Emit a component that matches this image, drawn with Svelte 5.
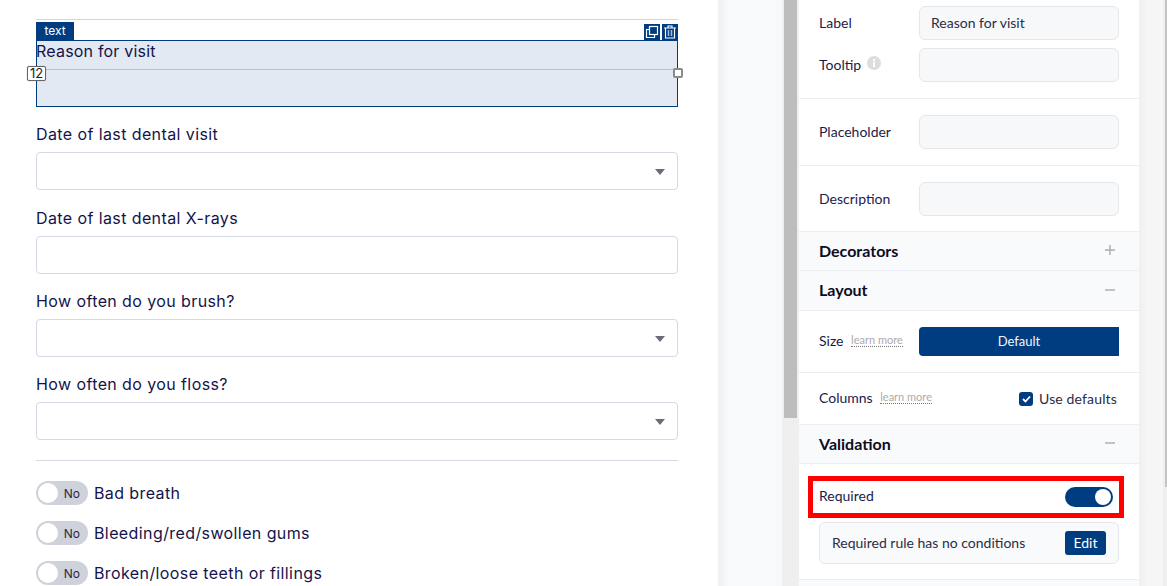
<script>
	const selects = [
		{ label: 'Date of last dental visit', caret: true },
		{ label: 'Date of last dental X-rays', caret: false },
		{ label: 'How often do you brush?', caret: true },
		{ label: 'How often do you floss?', caret: true }
	];
	const toggles = ['Bad breath', 'Bleeding/red/swollen gums', 'Broken/loose teeth or fillings'];
</script>

<div class="page">
	<main class="canvas">
		<div class="block">
			<div class="block-bar">
				<span class="tag">text</span>
				<span class="actions">
					<span class="action">
						<svg width="14" height="14" viewBox="0 0 14 14" fill="none" stroke="#fff" stroke-width="1.2">
							<rect x="4.5" y="1.5" width="8" height="8" />
							<path d="M4.5 4.5H1.5V12.5H9.5V9.5" />
						</svg>
					</span>
					<span class="action">
						<svg width="14" height="14" viewBox="0 0 14 14" fill="none" stroke="#fff" stroke-width="1.1">
							<path d="M1 3H13M5 3V1H9V3M2.5 3V13H11.5V3" />
							<path d="M5.5 5V11M8.5 5V11" stroke="#a9bcd6" stroke-width="1.5" />
						</svg>
					</span>
				</span>
			</div>
			<div class="block-body">
				<div class="block-label">Reason for visit</div>
				<div class="midline"></div>
				<span class="cols">12</span>
				<span class="handle"></span>
			</div>
		</div>

		{#each selects as field}
			<div class="field">
				<div class="field-label">{field.label}</div>
				<div class="input">
					{#if field.caret}<span class="caret"></span>{/if}
				</div>
			</div>
		{/each}

		<hr class="divider" />

		{#each toggles as name}
			<div class="toggle-row">
				<span class="no-toggle"><span class="knob"></span><span class="no">No</span></span>
				<span class="toggle-name">{name}</span>
			</div>
		{/each}
	</main>

	<div class="gutter">
		<div class="shade"></div>
		<div class="track"><div class="scroll-thumb"></div></div>
	</div>

	<aside class="panel">
		<section class="group first">
			<div class="prop">
				<span class="prop-label">Label</span>
				<div class="text-box">Reason for visit</div>
			</div>
			<div class="prop tooltip">
				<span class="prop-label">Tooltip
					<svg class="info" width="14" height="14" viewBox="0 0 14 14">
						<circle cx="7" cy="7" r="7" fill="#dcdde0" />
						<rect x="6" y="6" width="2" height="5" fill="#fff" />
						<rect x="6" y="3" width="2" height="2" fill="#fff" />
					</svg>
				</span>
				<div class="text-box"></div>
			</div>
		</section>
		<section class="group single">
			<div class="prop">
				<span class="prop-label">Placeholder</span>
				<div class="text-box"></div>
			</div>
		</section>
		<section class="group single last">
			<div class="prop">
				<span class="prop-label">Description</span>
				<div class="text-box"></div>
			</div>
		</section>

		<div class="head">
			<span>Decorators</span>
			<svg width="10" height="10" viewBox="0 0 10 10" stroke="#aaacb0" stroke-width="1.4"><path d="M0 5H10M5 0V10" /></svg>
		</div>
		<div class="head layout">
			<span>Layout</span>
			<svg width="10" height="10" viewBox="0 0 10 10" stroke="#aaacb0" stroke-width="1.4"><path d="M0 5H10" /></svg>
		</div>

		<section class="group size">
			<div class="prop">
				<span class="prop-label">Size <a class="learn">learn more</a></span>
				<div class="default-btn">Default</div>
			</div>
		</section>
		<section class="group columns">
			<span class="prop-label">Columns <a class="learn">learn more</a></span>
			<span class="defaults">
				<span class="check">
					<svg width="9" height="8" viewBox="0 0 9 8" fill="none" stroke="#fff" stroke-width="1.8"><path d="M1 4L3.5 6.5L8 1.5" /></svg>
				</span>
				Use defaults
			</span>
		</section>

		<div class="head">
			<span>Validation</span>
			<svg width="10" height="10" viewBox="0 0 10 10" stroke="#aaacb0" stroke-width="1.4"><path d="M0 5H10" /></svg>
		</div>

		<section class="group validation">
			<div class="required-row">
				<span class="prop-label">Required</span>
				<span class="switch"><span class="switch-knob"></span></span>
			</div>
			<div class="rule">
				<span class="rule-text">Required rule has no conditions</span>
				<span class="edit">Edit</span>
			</div>
		</section>
		<div class="head tail"></div>
	</aside>

	<div class="edge">
		<div class="edge-track"><div class="edge-thumb"></div></div>
	</div>
</div>

<style>
	:global(body) {
		margin: 0;
		overflow: hidden;
		background: #fff;
	}

	.page {
		display: flex;
		height: 586px;
		overflow: hidden;
		font-family: 'Lato', sans-serif;
		color: #1b1b4b;
	}

	/* left side, form preview */
	.canvas {
		width: 642px;
		flex-shrink: 0;
		padding: 19px 40px 0 36px;
		font-family: 'Inter', sans-serif;
		color: #14144a;
		letter-spacing: 0.4px;
	}

	.block {
		border-top: 1px solid #d6d6d6;
		padding-top: 2px;
	}

	.block-bar {
		display: flex;
		justify-content: space-between;
		align-items: flex-end;
		height: 18px;
	}

	.tag {
		width: 38px;
		height: 18px;
		background: #003d80;
		color: #fff;
		font-size: 12px;
		line-height: 18px;
		text-align: center;
		letter-spacing: 0;
	}

	.actions {
		display: flex;
		gap: 2px;
	}

	.action {
		width: 16px;
		height: 16px;
		background: #003d80;
		display: flex;
		align-items: center;
		justify-content: center;
	}

	.block-body {
		position: relative;
		height: 65px;
		background: #e3e9f2;
		border: 1px solid #003d80;
		width: 640px;
	}

	.block-label {
		font-size: 16px;
		line-height: 20px;
		margin-left: -1px;
		letter-spacing: 0.2px;
	}

	.midline {
		margin-top: 8px;
		border-top: 1px solid #bcc1ca;
	}

	.cols {
		position: absolute;
		left: -10px;
		top: 25px;
		width: 17px;
		height: 13px;
		background: #fff;
		border: 1px solid #666;
		border-radius: 2px;
		box-shadow: 0 0 1px #888;
		font-size: 13px;
		line-height: 13px;
		text-align: center;
		color: #222;
		letter-spacing: 0;
	}

	.handle {
		position: absolute;
		right: -6px;
		top: 27px;
		width: 6px;
		height: 6px;
		background: #fff;
		border: 2px solid #8a8a8a;
		border-radius: 2px;
	}

	.field {
		margin-top: 17px;
	}

	.field:nth-child(3) {
		margin-top: 18px;
	}

	.field-label {
		font-size: 16px;
		line-height: 20px;
		margin-bottom: 8px;
	}

	.input {
		position: relative;
		height: 36px;
		border: 1px solid #d5d8e6;
		border-radius: 4px;
	}

	.caret {
		position: absolute;
		right: 12px;
		top: 16px;
		border-left: 5px solid transparent;
		border-right: 5px solid transparent;
		border-top: 6px solid #6b6b7a;
	}

	.divider {
		border: 0;
		border-top: 1px solid #d9d9e3;
		margin: 20px 0;
	}

	.toggle-row {
		display: flex;
		align-items: center;
		gap: 6px;
		height: 24px;
		margin-bottom: 16px;
	}

	.no-toggle {
		display: flex;
		align-items: center;
		justify-content: space-between;
		box-sizing: border-box;
		width: 52px;
		height: 24px;
		padding: 2px 8px 2px 2px;
		border-radius: 12px;
		background: #cfd2da;
	}

	.knob {
		width: 20px;
		height: 20px;
		border-radius: 50%;
		background: #fff;
	}

	.no {
		font-size: 12px;
		color: #2a2a40;
		letter-spacing: 0;
	}

	.toggle-name {
		font-size: 16px;
	}

	/* scrollbar strip between preview and panel */
	.gutter {
		width: 81px;
		flex-shrink: 0;
		display: flex;
	}

	.shade {
		flex: 1;
		background: linear-gradient(to right, #eff0f1 0, #f8f9fb 10px);
	}

	.track {
		width: 13px;
		padding: 0 2px;
		background: #efefef;
	}

	.scroll-thumb {
		height: 418px;
		background: #bdbdbd;
	}

	/* settings panel */
	.panel {
		width: 340px;
		flex-shrink: 0;
		background: #fff;
		font-size: 14px;
	}

	.group {
		padding: 0 20px;
		border-bottom: 1px solid #edeef3;
		box-sizing: border-box;
	}

	.group.first {
		height: 99px;
		padding-top: 6px;
	}

	.group.single {
		height: 67px;
		padding-top: 16px;
	}

	.group.single.last {
		height: 66px;
	}

	.prop {
		display: flex;
		justify-content: space-between;
		align-items: center;
	}

	.tooltip {
		margin-top: 8px;
	}

	.prop-label {
		color: #1b1b4b;
		padding-bottom: 2px;
	}

	.info {
		margin-left: 2px;
	}

	.text-box {
		box-sizing: border-box;
		width: 200px;
		height: 34px;
		padding: 0 11px;
		line-height: 32px;
		background: #f7f8fa;
		border: 1px solid #e6e7eb;
		border-radius: 6px;
		color: #2c2c44;
	}

	.head {
		display: flex;
		justify-content: space-between;
		align-items: center;
		box-sizing: border-box;
		height: 39px;
		padding: 0 24px 2px 20px;
		background: #f9fafc;
		border-bottom: 1px solid #edeef3;
		font-size: 16px;
		font-weight: 700;
		color: #0c0c1e;
	}

	.head.layout {
		height: 40px;
	}

	.group.size {
		height: 62px;
		padding-top: 16px;
	}

	.learn {
		font-size: 11px;
		color: #b0a9a9;
		border-bottom: 1px dotted #777;
		margin-left: 4px;
		vertical-align: 2px;
	}

	.default-btn {
		width: 200px;
		height: 29px;
		line-height: 29px;
		text-align: center;
		background: #003d80;
		color: #f4f6fa;
		font-size: 13px;
		border-radius: 4px 0 0 4px;
	}

	.group.columns {
		display: flex;
		justify-content: space-between;
		align-items: center;
		height: 52px;
		padding-right: 22px;
	}

	.defaults {
		display: flex;
		align-items: center;
		gap: 6px;
		color: #2c2c44;
		letter-spacing: 0.15px;
	}

	.check {
		display: flex;
		align-items: center;
		justify-content: center;
		width: 14px;
		height: 14px;
		border-radius: 3px;
		background: #003d80;
	}

	.group.validation {
		height: 116px;
		padding-top: 12px;
	}

	.required-row {
		display: flex;
		justify-content: space-between;
		align-items: center;
		box-sizing: border-box;
		height: 42px;
		margin: 0 -5px 0 -11px;
		padding: 0 6px;
		border: 5px solid #f00;
	}

	.required-row .prop-label {
		padding-bottom: 4px;
	}

	.switch {
		display: flex;
		justify-content: flex-end;
		align-items: center;
		box-sizing: border-box;
		width: 48px;
		height: 20px;
		padding: 2px;
		border-radius: 10px;
		background: #003d80;
	}

	.switch-knob {
		width: 16px;
		height: 16px;
		border-radius: 50%;
		background: #fff;
	}

	.rule {
		display: flex;
		justify-content: space-between;
		align-items: center;
		box-sizing: border-box;
		height: 42px;
		margin-top: 4px;
		padding: 0 12px;
		background: #f9fafc;
		border: 1px solid #e6e7eb;
		border-radius: 6px;
		color: #2c2c44;
	}

	.rule-text {
		padding-bottom: 2px;
	}

	.edit {
		width: 41px;
		height: 24px;
		line-height: 24px;
		text-align: center;
		background: #003d80;
		color: #fff;
		border-radius: 3px;
	}

	.edge {
		flex: 1;
		display: flex;
		justify-content: flex-end;
		background: linear-gradient(to right, #f0f0f0 0, #f6f6f6 10px);
	}

	.edge-track {
		width: 4px;
		background: #efefef;
		display: flex;
		justify-content: flex-end;
	}

	.edge-thumb {
		width: 2px;
		height: 487px;
		background: #c4c4c4;
	}
</style>
